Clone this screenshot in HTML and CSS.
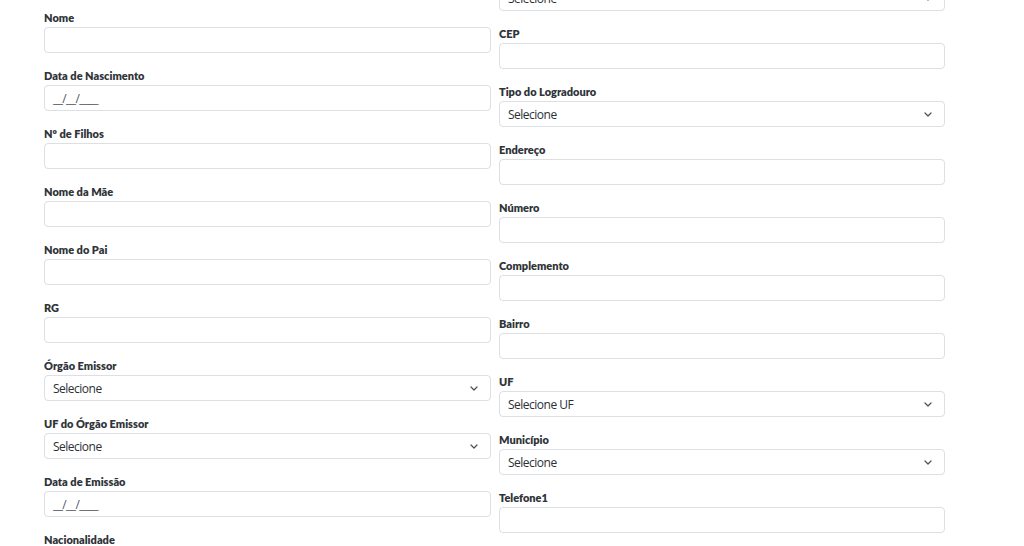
FILE: index.html
```html
<!DOCTYPE html>
<html lang="pt-BR">
<head>
<meta charset="utf-8">
<title>Cadastro</title>
<link rel="stylesheet" href="styles.css">
</head>
<body>
<form class="form">
  <div class="col col-left">
    <div class="field">
      <label class="label">Nome</label>
      <div class="input"></div>
    </div>
    <div class="field">
      <label class="label">Data de Nascimento</label>
      <div class="input"><span class="mask">__/__/____</span></div>
    </div>
    <div class="field">
      <label class="label">Nº de Filhos</label>
      <div class="input"></div>
    </div>
    <div class="field">
      <label class="label">Nome da Mãe</label>
      <div class="input"></div>
    </div>
    <div class="field">
      <label class="label">Nome do Pai</label>
      <div class="input"></div>
    </div>
    <div class="field">
      <label class="label">RG</label>
      <div class="input"></div>
    </div>
    <div class="field">
      <label class="label">Órgão Emissor</label>
      <div class="input select"><span>Selecione</span><svg class="chev" width="8" height="5" viewBox="0 0 8 5"><path d="M1 1l3 3 3-3" fill="none" stroke="#4a4f54" stroke-width="1.2" stroke-linecap="round" stroke-linejoin="round"/></svg></div>
    </div>
    <div class="field">
      <label class="label">UF do Órgão Emissor</label>
      <div class="input select"><span>Selecione</span><svg class="chev" width="8" height="5" viewBox="0 0 8 5"><path d="M1 1l3 3 3-3" fill="none" stroke="#4a4f54" stroke-width="1.2" stroke-linecap="round" stroke-linejoin="round"/></svg></div>
    </div>
    <div class="field">
      <label class="label">Data de Emissão</label>
      <div class="input"><span class="mask">__/__/____</span></div>
    </div>
    <div class="field">
      <label class="label">Nacionalidade</label>
      <div class="input"></div>
    </div>
  </div>
  <div class="col col-right">
    <div class="field">
      <label class="label">Estado Civil</label>
      <div class="input select"><span>Selecione</span><svg class="chev" width="8" height="5" viewBox="0 0 8 5"><path d="M1 1l3 3 3-3" fill="none" stroke="#4a4f54" stroke-width="1.2" stroke-linecap="round" stroke-linejoin="round"/></svg></div>
    </div>
    <div class="field">
      <label class="label">CEP</label>
      <div class="input"></div>
    </div>
    <div class="field">
      <label class="label">Tipo do Logradouro</label>
      <div class="input select"><span>Selecione</span><svg class="chev" width="8" height="5" viewBox="0 0 8 5"><path d="M1 1l3 3 3-3" fill="none" stroke="#4a4f54" stroke-width="1.2" stroke-linecap="round" stroke-linejoin="round"/></svg></div>
    </div>
    <div class="field">
      <label class="label">Endereço</label>
      <div class="input"></div>
    </div>
    <div class="field">
      <label class="label">Número</label>
      <div class="input"></div>
    </div>
    <div class="field">
      <label class="label">Complemento</label>
      <div class="input"></div>
    </div>
    <div class="field">
      <label class="label">Bairro</label>
      <div class="input"></div>
    </div>
    <div class="field">
      <label class="label">UF</label>
      <div class="input select"><span>Selecione UF</span><svg class="chev" width="8" height="5" viewBox="0 0 8 5"><path d="M1 1l3 3 3-3" fill="none" stroke="#4a4f54" stroke-width="1.2" stroke-linecap="round" stroke-linejoin="round"/></svg></div>
    </div>
    <div class="field">
      <label class="label">Município</label>
      <div class="input select"><span>Selecione</span><svg class="chev" width="8" height="5" viewBox="0 0 8 5"><path d="M1 1l3 3 3-3" fill="none" stroke="#4a4f54" stroke-width="1.2" stroke-linecap="round" stroke-linejoin="round"/></svg></div>
    </div>
    <div class="field">
      <label class="label">Telefone1</label>
      <div class="input"></div>
    </div>
  </div>
</form>
</body>
</html>
```

FILE: styles.css
```css
html, body {
  margin: 0;
  padding: 0;
  background: #ffffff;
  overflow: hidden;
  height: 546px;
}

.form {
  display: grid;
  grid-template-columns: 447px 446px;
  column-gap: 8px;
  align-items: start;
  padding: 10px 0 0 44px;
}

.col-right {
  margin-top: -42px;
}

.field {
  display: flex;
  flex-direction: column;
  margin-bottom: 15px;
}

.label {
  font-family: Lato, "Liberation Sans", sans-serif;
  font-weight: 800;
  font-size: 11px;
  line-height: 15px;
  margin-bottom: 2px;
  color: #2f3439;
}

.input {
  box-sizing: border-box;
  height: 26px;
  border: 1px solid #dcdfe3;
  border-radius: 4px;
  background: #fff;
  padding: 0 12px 0 8px;
  display: flex;
  align-items: center;
  font-family: "Open Sans", "Noto Sans", sans-serif;
  font-size: 12px;
  letter-spacing: -0.5px;
  color: #2b3035;
}

.select {
  justify-content: space-between;
}

.mask {
  color: #55595e;
  letter-spacing: -0.6px;
}

.chev {
  display: block;
}
```
